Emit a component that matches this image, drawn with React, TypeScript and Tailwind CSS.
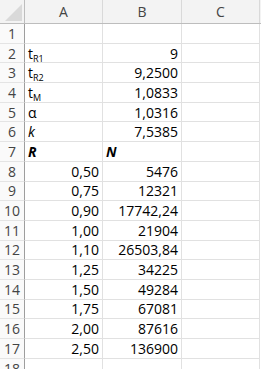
import React from "react";

type Cell = { a?: React.ReactNode; b?: React.ReactNode; aRight?: boolean };

const T = ({ sub }: { sub: string }) => (
  <span>
    t<sub className="text-[9px] align-baseline relative top-[3px]">{sub}</sub>
  </span>
);

const rows: Cell[] = [
  {},
  { a: <T sub="R1" />, b: "9" },
  { a: <T sub="R2" />, b: "9,2500" },
  { a: <T sub="M" />, b: "1,0833" },
  { a: "α", b: "1,0316" },
  { a: <i>k</i>, b: "7,5385" },
  { a: <b><i>R</i></b>, b: <b><i>N</i></b> },
  { a: "0,50", b: "5476", aRight: true },
  { a: "0,75", b: "12321", aRight: true },
  { a: "0,90", b: "17742,24", aRight: true },
  { a: "1,00", b: "21904", aRight: true },
  { a: "1,10", b: "26503,84", aRight: true },
  { a: "1,25", b: "34225", aRight: true },
  { a: "1,50", b: "49284", aRight: true },
  { a: "1,75", b: "67081", aRight: true },
  { a: "2,00", b: "87616", aRight: true },
  { a: "2,50", b: "136900", aRight: true },
  {},
];

export default function App() {
  return (
    <div
      className="w-[261px] h-[369px] overflow-hidden bg-white text-[14px] text-black"
      style={{ fontFamily: "'Open Sans', Lato, sans-serif" }}
    >
      {/* заголовки колонок */}
      <div className="flex h-[24px] bg-[#f3f3f3] border-b border-[#bdbdbd] text-[#444]">
        <div className="w-[25px] shrink-0 relative border-r border-[#bdbdbd]">
          <div className="absolute right-[2px] bottom-[2px] w-0 h-0 border-l-[17px] border-l-transparent border-b-[17px] border-b-[#d9d9d9]" />
        </div>
        <div className="w-[78px] flex items-center justify-center border-r border-[#d9d9d9]">A</div>
        <div className="w-[79px] flex items-center justify-center border-r border-[#d9d9d9]">B</div>
        <div className="w-[78px] flex items-center justify-center border-r border-[#d9d9d9]">C</div>
      </div>

      {rows.map((r, i) => {
        const isB = i === 6;
        return (
          <div key={i} className="flex h-[19.7px]">
            <div className="w-[25px] shrink-0 flex items-center justify-center text-[#444] border-r border-[#9e9e9e] border-b border-b-[#e4e4e4] bg-[#fafafa]">
              {i + 1}
            </div>
            <div
              className={`w-[78px] flex items-center px-[3px] border-r border-b border-[#e1e1e1] ${
                r.aRight ? "justify-end" : "justify-start"
              }`}
            >
              {r.a}
            </div>
            <div
              className={`w-[79px] flex items-center px-[3px] border-r border-b border-[#e1e1e1] ${
                isB ? "justify-start" : "justify-end"
              }`}
            >
              {r.b}
            </div>
            <div className="w-[78px] border-r border-b border-[#e1e1e1]" />
          </div>
        );
      })}
    </div>
  );
}
